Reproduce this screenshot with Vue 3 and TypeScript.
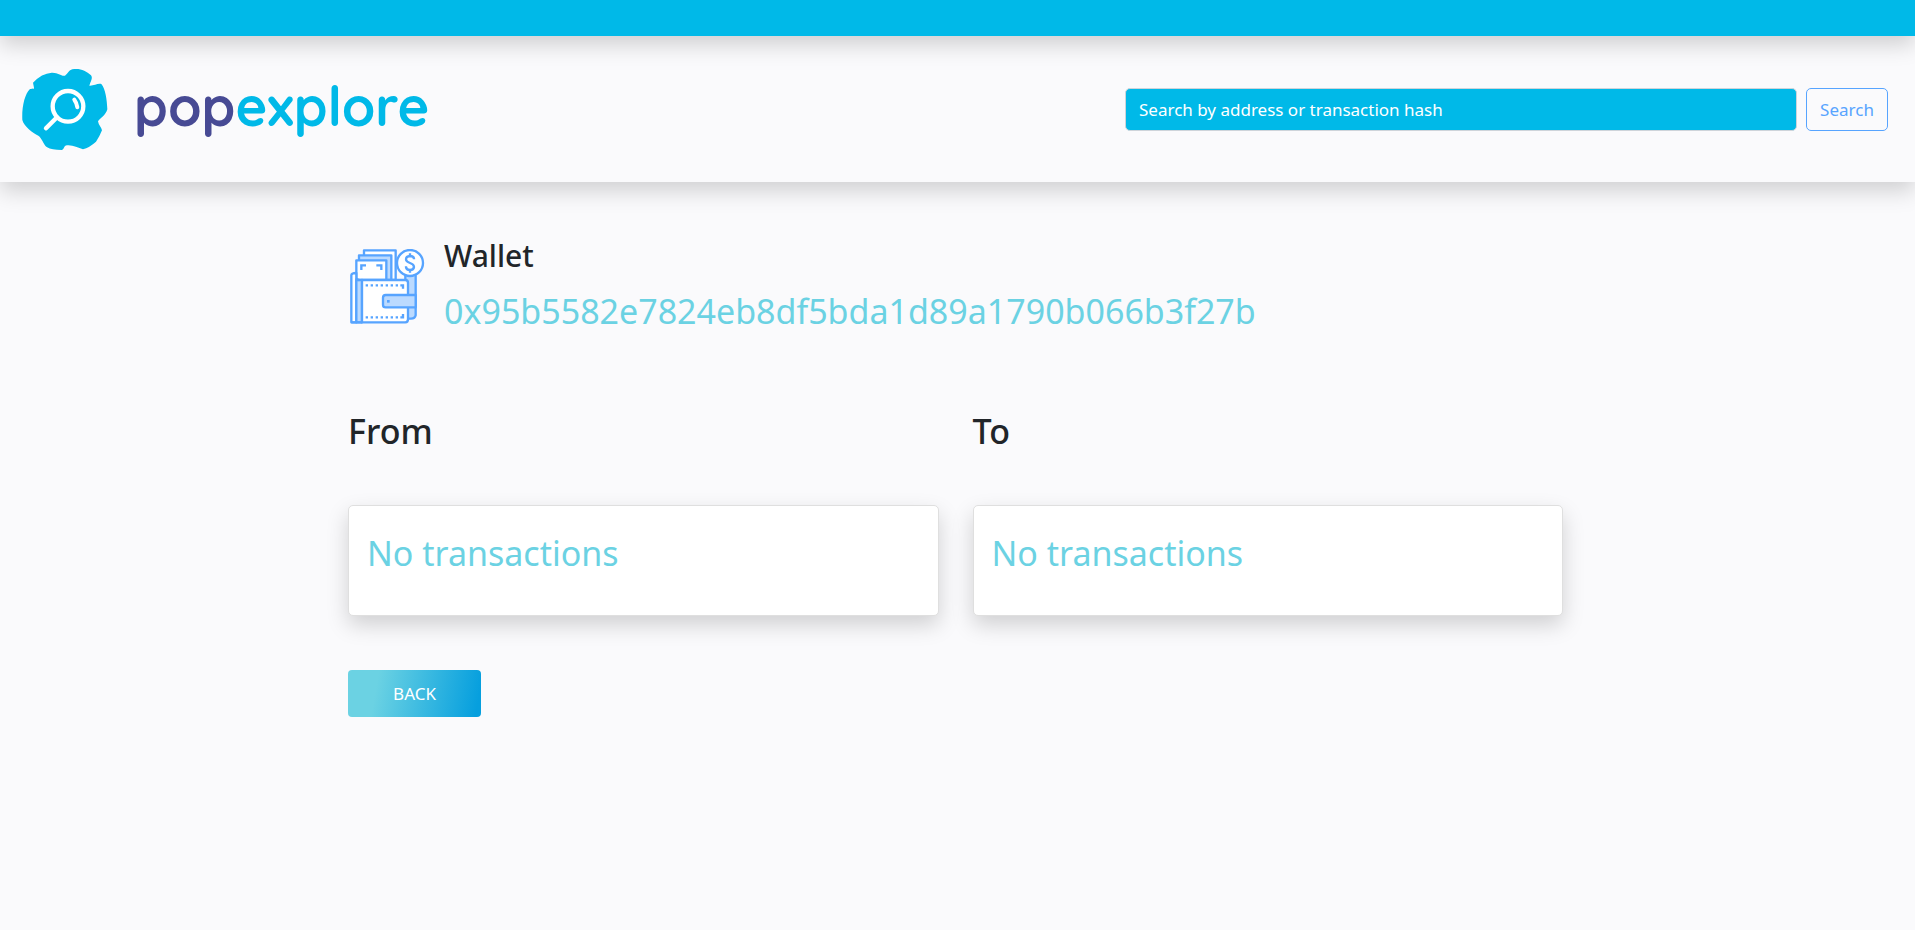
<script setup lang="ts">
import { ref } from 'vue'

interface Panel {
  title: string
  message: string
}

const query = ref<string>('')
const address = '0x95b5582e7824eb8df5bda1d89a1790b066b3f27b'
const panels: Panel[] = [
  { title: 'From', message: 'No transactions' },
  { title: 'To', message: 'No transactions' },
]
</script>

<template>
  <div class="page">
    <div class="topbar"></div>
    <header class="header">
      <a class="brand" href="#" aria-label="popexplore">
        <svg class="brand-mark" viewBox="66 144 258 249" aria-hidden="true">
          <path
            fill="#00b9e8"
            d="M99 188Q125 160 155 158C175 157 182 169 195 167C203 162 207 150 217 148C240 144 258 152 273 166C279 175 273 180 268 197C282 198 293 189 304 192C316 205 321 240 322 268C318 285 301 294 294 304C296 316 304 321 306 331Q300 347 288 365Q268 383 249 388C232 383 214 372 196 377C191 381 192 388 185 390C165 390 151 388 140 381C130 373 126 354 115 347C98 339 72 319 67 300C65 262 74 222 90 207C99 205 102 208 102 203Z"
          />
          <circle cx="204" cy="259" r="46" fill="none" stroke="#fff" stroke-width="13" />
          <path d="M171 292L138 325" fill="none" stroke="#fff" stroke-width="13" stroke-linecap="round" />
          <path d="M223 239Q230 248 232 262" fill="none" stroke="#fff" stroke-width="12" stroke-linecap="round" />
        </svg>
        <span class="brand-name"><span class="pop">pop</span><span class="explore">explore</span></span>
      </a>
      <form class="search" @submit.prevent>
        <input
          v-model="query"
          class="search-input"
          type="search"
          aria-label="Search by address or transaction hash"
          placeholder="Search by address or transaction hash"
        />
        <button class="search-button" type="submit">Search</button>
      </form>
    </header>

    <main class="content">
      <section class="wallet">
        <svg class="wallet-icon" viewBox="30 42 225 225" aria-hidden="true">
          <g fill="#fff" stroke="#57a4ff" stroke-width="7" stroke-linejoin="round">
            <path fill="#bbdaff" d="M196 114H218Q227 114 227 123V241Q225 251 213 251H196Z" />
            <path d="M72 46H167V135H72Z" />
            <path fill="#bbdaff" d="M57 61H154V135H57Z" />
            <path d="M49 76H139V135H49Z" />
            <path fill="none" d="M64 105V91H78M109 91H124V105" stroke-linejoin="miter" />
            <path d="M34 262V121Q34 114 49 114V262Z" />
            <path fill="#bbdaff" d="M49 135H66V262H49Z" />
            <path d="M66 135H196Q204 135 204 143V253Q204 262 196 262H66Z" />
            <path fill="none" d="M49 130Q50 135 58 135M34 262H66" />
            <path fill="none" d="M77 151H176M77 247H176" stroke-dasharray="7 8" stroke-linejoin="miter" />
            <path fill="none" d="M181 151H189V161M181 247H189V237" stroke-linejoin="miter" />
            <path fill="#bbdaff" d="M227 180H137Q129 180 129 188V209Q129 217 137 217H227Z" />
            <path stroke="none" fill="#57a4ff" d="M141 195H149V203H141Z" />
            <circle cx="210" cy="84" r="39" />
            <path
              fill="none"
              d="M222 73V71Q221 63 210 63Q198 64 198 73Q198 80 210 84Q222 88 222 96Q221 105 210 105Q199 105 198 96V94M210 55V63M210 105V113"
            />
          </g>
        </svg>
        <div class="wallet-text">
          <h1 class="wallet-title">Wallet</h1>
          <p class="accent">{{ address }}</p>
        </div>
      </section>

      <div class="panels">
        <section v-for="panel in panels" :key="panel.title">
          <h2 class="panel-title">{{ panel.title }}</h2>
          <div class="card">
            <p class="accent">{{ panel.message }}</p>
          </div>
        </section>
      </div>

      <button class="back" type="button">BACK</button>
    </main>
  </div>
</template>

<style>
body {
  margin: 0;
  background: #fafafc;
}
</style>

<style scoped>
.page {
  min-height: 100vh;
  background: #fafafc;
  color: #212529;
  font-family: 'Segoe UI', 'Noto Sans', sans-serif;
  font-size: 17px;
  line-height: 27px;
}

.topbar,
.header {
  position: relative;
  box-shadow: 0 9px 21px rgba(0, 0, 0, 0.17);
}

.topbar {
  z-index: 1;
  height: 36px;
  background: #00b9e8;
}

.header {
  display: flex;
  align-items: center;
  justify-content: space-between;
  box-sizing: border-box;
  min-height: 146px;
  padding: 0 27px 0 22px;
}

.brand {
  display: flex;
  align-items: center;
  gap: 26px;
  text-decoration: none;
}

.brand-mark {
  width: 86px;
  height: 83px;
}

.brand-name {
  padding-bottom: 6px;
  font-family: Quicksand, Inter, sans-serif;
  font-size: 54px;
  font-weight: 700;
  line-height: 70px;
}

.pop {
  color: #474a94;
}

.explore {
  color: #00b9e8;
}

.search {
  display: flex;
  flex: 0 1 763px;
  gap: 9px;
}

.search-input,
.search-button {
  box-sizing: border-box;
  height: 43px;
  border-radius: 5px;
  font: inherit;
}

.search-input {
  flex: 1;
  min-width: 0;
  padding: 0 13px;
  border: 1px solid #ced4da;
  background: #00b9e8;
  color: #fff;
  appearance: none;
}

.search-input::placeholder {
  color: #fff;
  opacity: 1;
}

.search-button {
  width: 82px;
  padding: 0;
  border: 1px solid #57a4ff;
  background: transparent;
  color: #57a4ff;
}

.content {
  box-sizing: border-box;
  max-width: 1219px;
  margin: 0 auto;
  padding: 49px 4px 48px 0;
}

.wallet {
  display: flex;
  align-items: center;
  gap: 19px;
}

.wallet-icon {
  flex: none;
  width: 75px;
  height: 75px;
  margin-left: 2px;
}

.wallet-text {
  min-width: 0;
  padding-bottom: 4px;
  overflow-wrap: anywhere;
}

.wallet-title {
  margin: 0 0 3px;
  font-size: 30px;
  font-weight: 500;
  line-height: 50px;
}

.accent {
  margin: 0;
  color: #6bd2e3;
  font-size: 34px;
  line-height: 54px;
}

.panels {
  display: grid;
  grid-template-columns: 1fr 1fr;
  gap: 34px;
  margin-top: 64px;
}

.panel-title {
  margin: 0 0 49px;
  font-size: 34px;
  font-weight: 500;
  line-height: 50px;
}

.card {
  padding: 20px 18px 35px;
  border: 1px solid #dfdfdf;
  border-radius: 5px;
  background: #fff;
  box-shadow: 0 9px 21px rgba(0, 0, 0, 0.17);
}

.back {
  width: 133px;
  height: 47px;
  margin-top: 54px;
  border: 0;
  border-radius: 4px;
  background: linear-gradient(100deg, #6bd2e3 22%, #069fde 96%);
  color: #fff;
  font: inherit;
}
</style>
